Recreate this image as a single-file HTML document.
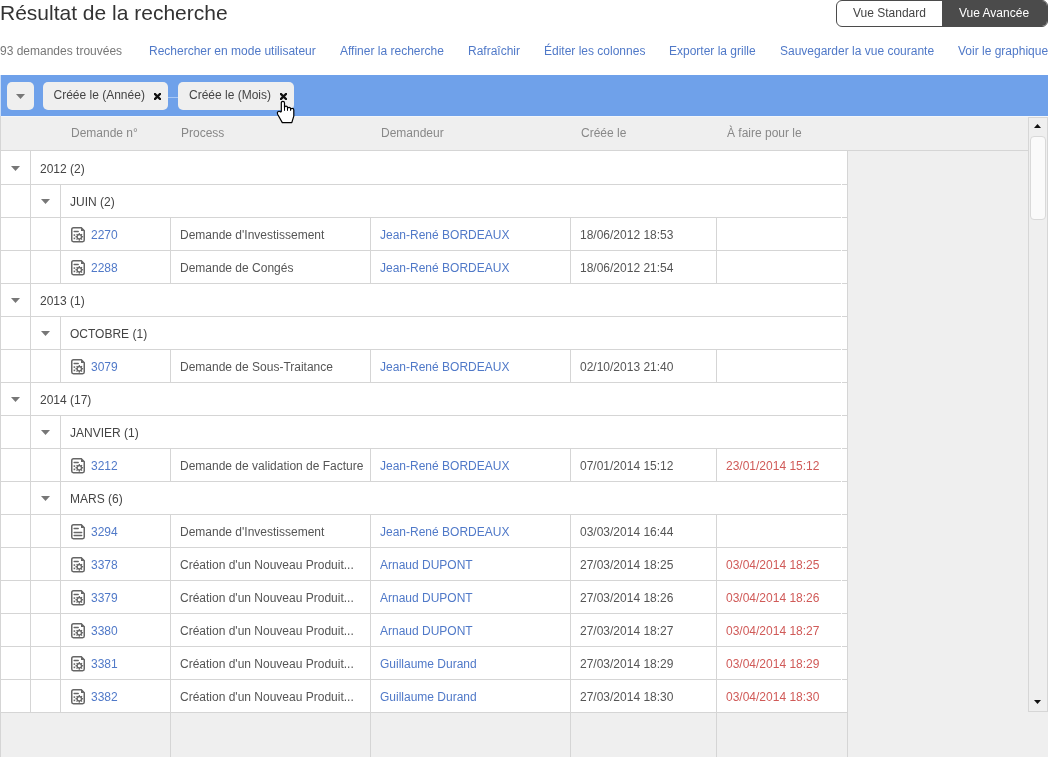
<!DOCTYPE html>
<html><head><meta charset="utf-8">
<style>
html,body{margin:0;padding:0;}
body{width:1048px;height:757px;overflow:hidden;position:relative;background:#fff;will-change:transform;font-family:"Liberation Sans",sans-serif;}
.ln{position:absolute;}
.t{position:absolute;white-space:nowrap;line-height:1;}
.title{color:#333;}
.count{color:#777;}
.link{color:#5079c8;}
.std{color:#444;}
.adv{color:#fff;}
.chip{color:#444;}
.hdr{color:#888;}
.grp{color:#444;}
.txt{color:#555;}
.red{color:#d05a58;}
.ic{position:absolute;}
</style></head><body>
<div class="t title" style="left:0px;top:2px;font-size:21px">Résultat de la recherche</div>
<div class="t count" style="left:0px;top:45px;font-size:12px">93 demandes trouvées</div>
<div class="t link" style="left:149px;top:45px;font-size:12px">Rechercher en mode utilisateur</div>
<div class="t link" style="left:340px;top:45px;font-size:12px">Affiner la recherche</div>
<div class="t link" style="left:468px;top:45px;font-size:12px">Rafraîchir</div>
<div class="t link" style="left:544px;top:45px;font-size:12px">Éditer les colonnes</div>
<div class="t link" style="left:669px;top:45px;font-size:12px">Exporter la grille</div>
<div class="t link" style="left:780px;top:45px;font-size:12px">Sauvegarder la vue courante</div>
<div class="t link" style="left:958px;top:45px;font-size:12px">Voir le graphique</div>
<div class="ln" style="left:836px;top:0px;width:212px;height:27px;box-sizing:border-box;border:1px solid #4b4b4b;border-radius:6px;background:#fff;overflow:hidden"><div style="position:absolute;left:105px;top:0;right:0;bottom:0;background:#4b4b4b"></div></div>
<div class="t std" style="left:853px;top:7px;font-size:12px">Vue Standard</div>
<div class="t adv" style="left:959px;top:7px;font-size:12px">Vue Avancée</div>
<div class="ln" style="left:0;top:75px;width:1048px;height:41px;background:#6fa1ea"></div>
<div class="ln" style="left:7px;top:82px;width:27px;height:28px;background:#efefef;border-radius:5px"></div>
<svg class="ln" style="left:16px;top:94px" width="9" height="5"><path d="M0,0 H9 L4.5,5 Z" fill="#777"/></svg>
<div class="ln" style="left:43px;top:82px;width:125px;height:28px;background:#efefef;border-radius:5px"></div>
<div class="ln" style="left:168px;top:97px;width:10px;height:1px;background:#a9c8f5"></div>
<div class="ln" style="left:178px;top:82px;width:116px;height:28px;background:#efefef;border-radius:5px"></div>
<div class="t chip" style="left:53.5px;top:89px;font-size:12px">Créée le (Année)</div>
<div class="t chip" style="left:189px;top:89px;font-size:12px">Créée le (Mois)</div>
<svg class="ln" style="left:154px;top:93px" width="7" height="7" viewBox="0 0 7 7"><path d="M1,1 L6,6 M6,1 L1,6" stroke="#111" stroke-width="2.3" stroke-linecap="square"/></svg>
<svg class="ln" style="left:280px;top:93px" width="7" height="7" viewBox="0 0 7 7"><path d="M1,1 L6,6 M6,1 L1,6" stroke="#111" stroke-width="2.3" stroke-linecap="square"/></svg>
<div class="ln" style="left:0;top:116px;width:1048px;height:641px;background:#efefef"></div>
<div class="ln" style="left:0px;top:116px;width:1px;height:641px;background:#d5d5d5"></div>
<div class="ln" style="left:1px;top:116px;width:1047px;height:1px;background:#f3f6fa"></div>
<div class="ln" style="left:0px;top:75px;width:1px;height:41px;background:#c9ddf8"></div>
<div class="ln" style="left:0px;top:150px;width:1028px;height:1px;background:#d5d5d5"></div>
<div class="t hdr" style="left:71px;top:127px;font-size:12px">Demande n°</div>
<div class="t hdr" style="left:181px;top:127px;font-size:12px">Process</div>
<div class="t hdr" style="left:381px;top:127px;font-size:12px">Demandeur</div>
<div class="t hdr" style="left:581px;top:127px;font-size:12px">Créée le</div>
<div class="t hdr" style="left:727px;top:127px;font-size:12px">À faire pour le</div>
<div class="ln" style="left:1px;top:151px;width:846px;height:561px;background:#fff"></div>
<div class="ln" style="left:1px;top:184px;width:847px;height:1px;background:#d5d5d5"></div>
<div class="ln" style="left:841px;top:184px;width:1px;height:1px;background:#fff"></div>
<div class="ln" style="left:30px;top:151px;width:1px;height:33px;background:#d5d5d5"></div>
<div class="ln" style="left:847px;top:151px;width:1px;height:33px;background:#d5d5d5"></div>
<svg class="ln" style="left:11px;top:166px" width="9" height="5"><path d="M0,0 H9 L4.5,5 Z" fill="#777"/></svg>
<div class="t grp" style="left:40px;top:163px;font-size:12px">2012 (2)</div>
<div class="ln" style="left:1px;top:217px;width:847px;height:1px;background:#d5d5d5"></div>
<div class="ln" style="left:841px;top:217px;width:1px;height:1px;background:#fff"></div>
<div class="ln" style="left:30px;top:185px;width:1px;height:32px;background:#d5d5d5"></div>
<div class="ln" style="left:847px;top:185px;width:1px;height:32px;background:#d5d5d5"></div>
<div class="ln" style="left:60px;top:185px;width:1px;height:32px;background:#d5d5d5"></div>
<svg class="ln" style="left:41px;top:199px" width="9" height="5"><path d="M0,0 H9 L4.5,5 Z" fill="#777"/></svg>
<div class="t grp" style="left:70px;top:196px;font-size:12px">JUIN (2)</div>
<div class="ln" style="left:1px;top:250px;width:847px;height:1px;background:#d5d5d5"></div>
<div class="ln" style="left:841px;top:250px;width:1px;height:1px;background:#fff"></div>
<div class="ln" style="left:30px;top:218px;width:1px;height:32px;background:#d5d5d5"></div>
<div class="ln" style="left:847px;top:218px;width:1px;height:32px;background:#d5d5d5"></div>
<div class="ln" style="left:60px;top:218px;width:1px;height:32px;background:#d5d5d5"></div>
<div class="ln" style="left:170px;top:218px;width:1px;height:32px;background:#d5d5d5"></div>
<div class="ln" style="left:370px;top:218px;width:1px;height:32px;background:#d5d5d5"></div>
<div class="ln" style="left:570px;top:218px;width:1px;height:32px;background:#d5d5d5"></div>
<div class="ln" style="left:716px;top:218px;width:1px;height:32px;background:#d5d5d5"></div>
<svg class="ic" style="left:71px;top:227px" width="15" height="17" viewBox="0 0 15 17">
<path d="M2.5,0.75 H10.3 L13.25,3.7 V13.1 Q13.25,14.8 11.6,14.8 H2.4 Q0.75,14.8 0.75,13.1 V2.5 Q0.75,0.75 2.5,0.75 Z" fill="none" stroke="#666" stroke-width="1.5"/>
<path d="M10,0.5 L13.5,4 H10 Z" fill="#666"/>
<line x1="3.2" y1="4.5" x2="7.2" y2="4.5" stroke="#666" stroke-width="1.5" stroke-linecap="round"/>
<rect x="2.6" y="7.3" width="1.6" height="1.6" fill="#666"/><rect x="2.6" y="10.6" width="1.6" height="1.6" fill="#666"/>
<path d="M7.58,6.99 L7.75,5.94 L8.85,5.94 L9.02,6.99 L9.78,7.30 L10.64,6.68 L11.42,7.46 L10.80,8.32 L11.11,9.08 L12.16,9.25 L12.16,10.35 L11.11,10.52 L10.80,11.28 L11.42,12.14 L10.64,12.92 L9.78,12.30 L9.02,12.61 L8.85,13.66 L7.75,13.66 L7.58,12.61 L6.82,12.30 L5.96,12.92 L5.18,12.14 L5.80,11.28 L5.49,10.52 L4.44,10.35 L4.44,9.25 L5.49,9.08 L5.80,8.32 L5.18,7.46 L5.96,6.68 L6.82,7.30 Z" fill="#666"/>
<circle cx="8.3" cy="9.8" r="1.5" fill="#fff"/>
</svg>
<div class="t link" style="left:91px;top:229px;font-size:12px">2270</div>
<div class="t txt" style="left:180px;top:229px;font-size:12px">Demande d'Investissement</div>
<div class="t link" style="left:380px;top:229px;font-size:12px">Jean-René BORDEAUX</div>
<div class="t txt" style="left:580px;top:229px;font-size:12px">18/06/2012 18:53</div>
<div class="ln" style="left:1px;top:283px;width:847px;height:1px;background:#d5d5d5"></div>
<div class="ln" style="left:841px;top:283px;width:1px;height:1px;background:#fff"></div>
<div class="ln" style="left:30px;top:251px;width:1px;height:32px;background:#d5d5d5"></div>
<div class="ln" style="left:847px;top:251px;width:1px;height:32px;background:#d5d5d5"></div>
<div class="ln" style="left:60px;top:251px;width:1px;height:32px;background:#d5d5d5"></div>
<div class="ln" style="left:170px;top:251px;width:1px;height:32px;background:#d5d5d5"></div>
<div class="ln" style="left:370px;top:251px;width:1px;height:32px;background:#d5d5d5"></div>
<div class="ln" style="left:570px;top:251px;width:1px;height:32px;background:#d5d5d5"></div>
<div class="ln" style="left:716px;top:251px;width:1px;height:32px;background:#d5d5d5"></div>
<svg class="ic" style="left:71px;top:260px" width="15" height="17" viewBox="0 0 15 17">
<path d="M2.5,0.75 H10.3 L13.25,3.7 V13.1 Q13.25,14.8 11.6,14.8 H2.4 Q0.75,14.8 0.75,13.1 V2.5 Q0.75,0.75 2.5,0.75 Z" fill="none" stroke="#666" stroke-width="1.5"/>
<path d="M10,0.5 L13.5,4 H10 Z" fill="#666"/>
<line x1="3.2" y1="4.5" x2="7.2" y2="4.5" stroke="#666" stroke-width="1.5" stroke-linecap="round"/>
<rect x="2.6" y="7.3" width="1.6" height="1.6" fill="#666"/><rect x="2.6" y="10.6" width="1.6" height="1.6" fill="#666"/>
<path d="M7.58,6.99 L7.75,5.94 L8.85,5.94 L9.02,6.99 L9.78,7.30 L10.64,6.68 L11.42,7.46 L10.80,8.32 L11.11,9.08 L12.16,9.25 L12.16,10.35 L11.11,10.52 L10.80,11.28 L11.42,12.14 L10.64,12.92 L9.78,12.30 L9.02,12.61 L8.85,13.66 L7.75,13.66 L7.58,12.61 L6.82,12.30 L5.96,12.92 L5.18,12.14 L5.80,11.28 L5.49,10.52 L4.44,10.35 L4.44,9.25 L5.49,9.08 L5.80,8.32 L5.18,7.46 L5.96,6.68 L6.82,7.30 Z" fill="#666"/>
<circle cx="8.3" cy="9.8" r="1.5" fill="#fff"/>
</svg>
<div class="t link" style="left:91px;top:262px;font-size:12px">2288</div>
<div class="t txt" style="left:180px;top:262px;font-size:12px">Demande de Congés</div>
<div class="t link" style="left:380px;top:262px;font-size:12px">Jean-René BORDEAUX</div>
<div class="t txt" style="left:580px;top:262px;font-size:12px">18/06/2012 21:54</div>
<div class="ln" style="left:1px;top:316px;width:847px;height:1px;background:#d5d5d5"></div>
<div class="ln" style="left:841px;top:316px;width:1px;height:1px;background:#fff"></div>
<div class="ln" style="left:30px;top:284px;width:1px;height:32px;background:#d5d5d5"></div>
<div class="ln" style="left:847px;top:284px;width:1px;height:32px;background:#d5d5d5"></div>
<svg class="ln" style="left:11px;top:298px" width="9" height="5"><path d="M0,0 H9 L4.5,5 Z" fill="#777"/></svg>
<div class="t grp" style="left:40px;top:295px;font-size:12px">2013 (1)</div>
<div class="ln" style="left:1px;top:349px;width:847px;height:1px;background:#d5d5d5"></div>
<div class="ln" style="left:841px;top:349px;width:1px;height:1px;background:#fff"></div>
<div class="ln" style="left:30px;top:317px;width:1px;height:32px;background:#d5d5d5"></div>
<div class="ln" style="left:847px;top:317px;width:1px;height:32px;background:#d5d5d5"></div>
<div class="ln" style="left:60px;top:317px;width:1px;height:32px;background:#d5d5d5"></div>
<svg class="ln" style="left:41px;top:331px" width="9" height="5"><path d="M0,0 H9 L4.5,5 Z" fill="#777"/></svg>
<div class="t grp" style="left:70px;top:328px;font-size:12px">OCTOBRE (1)</div>
<div class="ln" style="left:1px;top:382px;width:847px;height:1px;background:#d5d5d5"></div>
<div class="ln" style="left:841px;top:382px;width:1px;height:1px;background:#fff"></div>
<div class="ln" style="left:30px;top:350px;width:1px;height:32px;background:#d5d5d5"></div>
<div class="ln" style="left:847px;top:350px;width:1px;height:32px;background:#d5d5d5"></div>
<div class="ln" style="left:60px;top:350px;width:1px;height:32px;background:#d5d5d5"></div>
<div class="ln" style="left:170px;top:350px;width:1px;height:32px;background:#d5d5d5"></div>
<div class="ln" style="left:370px;top:350px;width:1px;height:32px;background:#d5d5d5"></div>
<div class="ln" style="left:570px;top:350px;width:1px;height:32px;background:#d5d5d5"></div>
<div class="ln" style="left:716px;top:350px;width:1px;height:32px;background:#d5d5d5"></div>
<svg class="ic" style="left:71px;top:359px" width="15" height="17" viewBox="0 0 15 17">
<path d="M2.5,0.75 H10.3 L13.25,3.7 V13.1 Q13.25,14.8 11.6,14.8 H2.4 Q0.75,14.8 0.75,13.1 V2.5 Q0.75,0.75 2.5,0.75 Z" fill="none" stroke="#666" stroke-width="1.5"/>
<path d="M10,0.5 L13.5,4 H10 Z" fill="#666"/>
<line x1="3.2" y1="4.5" x2="7.2" y2="4.5" stroke="#666" stroke-width="1.5" stroke-linecap="round"/>
<rect x="2.6" y="7.3" width="1.6" height="1.6" fill="#666"/><rect x="2.6" y="10.6" width="1.6" height="1.6" fill="#666"/>
<path d="M7.58,6.99 L7.75,5.94 L8.85,5.94 L9.02,6.99 L9.78,7.30 L10.64,6.68 L11.42,7.46 L10.80,8.32 L11.11,9.08 L12.16,9.25 L12.16,10.35 L11.11,10.52 L10.80,11.28 L11.42,12.14 L10.64,12.92 L9.78,12.30 L9.02,12.61 L8.85,13.66 L7.75,13.66 L7.58,12.61 L6.82,12.30 L5.96,12.92 L5.18,12.14 L5.80,11.28 L5.49,10.52 L4.44,10.35 L4.44,9.25 L5.49,9.08 L5.80,8.32 L5.18,7.46 L5.96,6.68 L6.82,7.30 Z" fill="#666"/>
<circle cx="8.3" cy="9.8" r="1.5" fill="#fff"/>
</svg>
<div class="t link" style="left:91px;top:361px;font-size:12px">3079</div>
<div class="t txt" style="left:180px;top:361px;font-size:12px">Demande de Sous-Traitance</div>
<div class="t link" style="left:380px;top:361px;font-size:12px">Jean-René BORDEAUX</div>
<div class="t txt" style="left:580px;top:361px;font-size:12px">02/10/2013 21:40</div>
<div class="ln" style="left:1px;top:415px;width:847px;height:1px;background:#d5d5d5"></div>
<div class="ln" style="left:841px;top:415px;width:1px;height:1px;background:#fff"></div>
<div class="ln" style="left:30px;top:383px;width:1px;height:32px;background:#d5d5d5"></div>
<div class="ln" style="left:847px;top:383px;width:1px;height:32px;background:#d5d5d5"></div>
<svg class="ln" style="left:11px;top:397px" width="9" height="5"><path d="M0,0 H9 L4.5,5 Z" fill="#777"/></svg>
<div class="t grp" style="left:40px;top:394px;font-size:12px">2014 (17)</div>
<div class="ln" style="left:1px;top:448px;width:847px;height:1px;background:#d5d5d5"></div>
<div class="ln" style="left:841px;top:448px;width:1px;height:1px;background:#fff"></div>
<div class="ln" style="left:30px;top:416px;width:1px;height:32px;background:#d5d5d5"></div>
<div class="ln" style="left:847px;top:416px;width:1px;height:32px;background:#d5d5d5"></div>
<div class="ln" style="left:60px;top:416px;width:1px;height:32px;background:#d5d5d5"></div>
<svg class="ln" style="left:41px;top:430px" width="9" height="5"><path d="M0,0 H9 L4.5,5 Z" fill="#777"/></svg>
<div class="t grp" style="left:70px;top:427px;font-size:12px">JANVIER (1)</div>
<div class="ln" style="left:1px;top:481px;width:847px;height:1px;background:#d5d5d5"></div>
<div class="ln" style="left:841px;top:481px;width:1px;height:1px;background:#fff"></div>
<div class="ln" style="left:30px;top:449px;width:1px;height:32px;background:#d5d5d5"></div>
<div class="ln" style="left:847px;top:449px;width:1px;height:32px;background:#d5d5d5"></div>
<div class="ln" style="left:60px;top:449px;width:1px;height:32px;background:#d5d5d5"></div>
<div class="ln" style="left:170px;top:449px;width:1px;height:32px;background:#d5d5d5"></div>
<div class="ln" style="left:370px;top:449px;width:1px;height:32px;background:#d5d5d5"></div>
<div class="ln" style="left:570px;top:449px;width:1px;height:32px;background:#d5d5d5"></div>
<div class="ln" style="left:716px;top:449px;width:1px;height:32px;background:#d5d5d5"></div>
<svg class="ic" style="left:71px;top:458px" width="15" height="17" viewBox="0 0 15 17">
<path d="M2.5,0.75 H10.3 L13.25,3.7 V13.1 Q13.25,14.8 11.6,14.8 H2.4 Q0.75,14.8 0.75,13.1 V2.5 Q0.75,0.75 2.5,0.75 Z" fill="none" stroke="#666" stroke-width="1.5"/>
<path d="M10,0.5 L13.5,4 H10 Z" fill="#666"/>
<line x1="3.2" y1="4.5" x2="7.2" y2="4.5" stroke="#666" stroke-width="1.5" stroke-linecap="round"/>
<rect x="2.6" y="7.3" width="1.6" height="1.6" fill="#666"/><rect x="2.6" y="10.6" width="1.6" height="1.6" fill="#666"/>
<path d="M7.58,6.99 L7.75,5.94 L8.85,5.94 L9.02,6.99 L9.78,7.30 L10.64,6.68 L11.42,7.46 L10.80,8.32 L11.11,9.08 L12.16,9.25 L12.16,10.35 L11.11,10.52 L10.80,11.28 L11.42,12.14 L10.64,12.92 L9.78,12.30 L9.02,12.61 L8.85,13.66 L7.75,13.66 L7.58,12.61 L6.82,12.30 L5.96,12.92 L5.18,12.14 L5.80,11.28 L5.49,10.52 L4.44,10.35 L4.44,9.25 L5.49,9.08 L5.80,8.32 L5.18,7.46 L5.96,6.68 L6.82,7.30 Z" fill="#666"/>
<circle cx="8.3" cy="9.8" r="1.5" fill="#fff"/>
</svg>
<div class="t link" style="left:91px;top:460px;font-size:12px">3212</div>
<div class="t txt" style="left:180px;top:460px;font-size:12px">Demande de validation de Facture</div>
<div class="t link" style="left:380px;top:460px;font-size:12px">Jean-René BORDEAUX</div>
<div class="t txt" style="left:580px;top:460px;font-size:12px">07/01/2014 15:12</div>
<div class="t red" style="left:726px;top:460px;font-size:12px">23/01/2014 15:12</div>
<div class="ln" style="left:1px;top:514px;width:847px;height:1px;background:#d5d5d5"></div>
<div class="ln" style="left:841px;top:514px;width:1px;height:1px;background:#fff"></div>
<div class="ln" style="left:30px;top:482px;width:1px;height:32px;background:#d5d5d5"></div>
<div class="ln" style="left:847px;top:482px;width:1px;height:32px;background:#d5d5d5"></div>
<div class="ln" style="left:60px;top:482px;width:1px;height:32px;background:#d5d5d5"></div>
<svg class="ln" style="left:41px;top:496px" width="9" height="5"><path d="M0,0 H9 L4.5,5 Z" fill="#777"/></svg>
<div class="t grp" style="left:70px;top:493px;font-size:12px">MARS (6)</div>
<div class="ln" style="left:1px;top:547px;width:847px;height:1px;background:#d5d5d5"></div>
<div class="ln" style="left:841px;top:547px;width:1px;height:1px;background:#fff"></div>
<div class="ln" style="left:30px;top:515px;width:1px;height:32px;background:#d5d5d5"></div>
<div class="ln" style="left:847px;top:515px;width:1px;height:32px;background:#d5d5d5"></div>
<div class="ln" style="left:60px;top:515px;width:1px;height:32px;background:#d5d5d5"></div>
<div class="ln" style="left:170px;top:515px;width:1px;height:32px;background:#d5d5d5"></div>
<div class="ln" style="left:370px;top:515px;width:1px;height:32px;background:#d5d5d5"></div>
<div class="ln" style="left:570px;top:515px;width:1px;height:32px;background:#d5d5d5"></div>
<div class="ln" style="left:716px;top:515px;width:1px;height:32px;background:#d5d5d5"></div>
<svg class="ic" style="left:71px;top:524px" width="15" height="17" viewBox="0 0 15 17">
<path d="M2.5,0.75 H10.3 L13.25,3.7 V13.1 Q13.25,14.8 11.6,14.8 H2.4 Q0.75,14.8 0.75,13.1 V2.5 Q0.75,0.75 2.5,0.75 Z" fill="none" stroke="#666" stroke-width="1.5"/>
<path d="M10,0.5 L13.5,4 H10 Z" fill="#666"/>
<line x1="3.2" y1="4.5" x2="7.2" y2="4.5" stroke="#666" stroke-width="1.5" stroke-linecap="round"/>
<line x1="3.2" y1="8.5" x2="10.6" y2="8.5" stroke="#666" stroke-width="1.5" stroke-linecap="round"/>
<line x1="3.2" y1="11.5" x2="10.6" y2="11.5" stroke="#666" stroke-width="1.5" stroke-linecap="round"/>
</svg>
<div class="t link" style="left:91px;top:526px;font-size:12px">3294</div>
<div class="t txt" style="left:180px;top:526px;font-size:12px">Demande d'Investissement</div>
<div class="t link" style="left:380px;top:526px;font-size:12px">Jean-René BORDEAUX</div>
<div class="t txt" style="left:580px;top:526px;font-size:12px">03/03/2014 16:44</div>
<div class="ln" style="left:1px;top:580px;width:847px;height:1px;background:#d5d5d5"></div>
<div class="ln" style="left:841px;top:580px;width:1px;height:1px;background:#fff"></div>
<div class="ln" style="left:30px;top:548px;width:1px;height:32px;background:#d5d5d5"></div>
<div class="ln" style="left:847px;top:548px;width:1px;height:32px;background:#d5d5d5"></div>
<div class="ln" style="left:60px;top:548px;width:1px;height:32px;background:#d5d5d5"></div>
<div class="ln" style="left:170px;top:548px;width:1px;height:32px;background:#d5d5d5"></div>
<div class="ln" style="left:370px;top:548px;width:1px;height:32px;background:#d5d5d5"></div>
<div class="ln" style="left:570px;top:548px;width:1px;height:32px;background:#d5d5d5"></div>
<div class="ln" style="left:716px;top:548px;width:1px;height:32px;background:#d5d5d5"></div>
<svg class="ic" style="left:71px;top:557px" width="15" height="17" viewBox="0 0 15 17">
<path d="M2.5,0.75 H10.3 L13.25,3.7 V13.1 Q13.25,14.8 11.6,14.8 H2.4 Q0.75,14.8 0.75,13.1 V2.5 Q0.75,0.75 2.5,0.75 Z" fill="none" stroke="#666" stroke-width="1.5"/>
<path d="M10,0.5 L13.5,4 H10 Z" fill="#666"/>
<line x1="3.2" y1="4.5" x2="7.2" y2="4.5" stroke="#666" stroke-width="1.5" stroke-linecap="round"/>
<rect x="2.6" y="7.3" width="1.6" height="1.6" fill="#666"/><rect x="2.6" y="10.6" width="1.6" height="1.6" fill="#666"/>
<path d="M7.58,6.99 L7.75,5.94 L8.85,5.94 L9.02,6.99 L9.78,7.30 L10.64,6.68 L11.42,7.46 L10.80,8.32 L11.11,9.08 L12.16,9.25 L12.16,10.35 L11.11,10.52 L10.80,11.28 L11.42,12.14 L10.64,12.92 L9.78,12.30 L9.02,12.61 L8.85,13.66 L7.75,13.66 L7.58,12.61 L6.82,12.30 L5.96,12.92 L5.18,12.14 L5.80,11.28 L5.49,10.52 L4.44,10.35 L4.44,9.25 L5.49,9.08 L5.80,8.32 L5.18,7.46 L5.96,6.68 L6.82,7.30 Z" fill="#666"/>
<circle cx="8.3" cy="9.8" r="1.5" fill="#fff"/>
</svg>
<div class="t link" style="left:91px;top:559px;font-size:12px">3378</div>
<div class="t txt" style="left:180px;top:559px;font-size:12px">Création d'un Nouveau Produit...</div>
<div class="t link" style="left:380px;top:559px;font-size:12px">Arnaud DUPONT</div>
<div class="t txt" style="left:580px;top:559px;font-size:12px">27/03/2014 18:25</div>
<div class="t red" style="left:726px;top:559px;font-size:12px">03/04/2014 18:25</div>
<div class="ln" style="left:1px;top:613px;width:847px;height:1px;background:#d5d5d5"></div>
<div class="ln" style="left:841px;top:613px;width:1px;height:1px;background:#fff"></div>
<div class="ln" style="left:30px;top:581px;width:1px;height:32px;background:#d5d5d5"></div>
<div class="ln" style="left:847px;top:581px;width:1px;height:32px;background:#d5d5d5"></div>
<div class="ln" style="left:60px;top:581px;width:1px;height:32px;background:#d5d5d5"></div>
<div class="ln" style="left:170px;top:581px;width:1px;height:32px;background:#d5d5d5"></div>
<div class="ln" style="left:370px;top:581px;width:1px;height:32px;background:#d5d5d5"></div>
<div class="ln" style="left:570px;top:581px;width:1px;height:32px;background:#d5d5d5"></div>
<div class="ln" style="left:716px;top:581px;width:1px;height:32px;background:#d5d5d5"></div>
<svg class="ic" style="left:71px;top:590px" width="15" height="17" viewBox="0 0 15 17">
<path d="M2.5,0.75 H10.3 L13.25,3.7 V13.1 Q13.25,14.8 11.6,14.8 H2.4 Q0.75,14.8 0.75,13.1 V2.5 Q0.75,0.75 2.5,0.75 Z" fill="none" stroke="#666" stroke-width="1.5"/>
<path d="M10,0.5 L13.5,4 H10 Z" fill="#666"/>
<line x1="3.2" y1="4.5" x2="7.2" y2="4.5" stroke="#666" stroke-width="1.5" stroke-linecap="round"/>
<rect x="2.6" y="7.3" width="1.6" height="1.6" fill="#666"/><rect x="2.6" y="10.6" width="1.6" height="1.6" fill="#666"/>
<path d="M7.58,6.99 L7.75,5.94 L8.85,5.94 L9.02,6.99 L9.78,7.30 L10.64,6.68 L11.42,7.46 L10.80,8.32 L11.11,9.08 L12.16,9.25 L12.16,10.35 L11.11,10.52 L10.80,11.28 L11.42,12.14 L10.64,12.92 L9.78,12.30 L9.02,12.61 L8.85,13.66 L7.75,13.66 L7.58,12.61 L6.82,12.30 L5.96,12.92 L5.18,12.14 L5.80,11.28 L5.49,10.52 L4.44,10.35 L4.44,9.25 L5.49,9.08 L5.80,8.32 L5.18,7.46 L5.96,6.68 L6.82,7.30 Z" fill="#666"/>
<circle cx="8.3" cy="9.8" r="1.5" fill="#fff"/>
</svg>
<div class="t link" style="left:91px;top:592px;font-size:12px">3379</div>
<div class="t txt" style="left:180px;top:592px;font-size:12px">Création d'un Nouveau Produit...</div>
<div class="t link" style="left:380px;top:592px;font-size:12px">Arnaud DUPONT</div>
<div class="t txt" style="left:580px;top:592px;font-size:12px">27/03/2014 18:26</div>
<div class="t red" style="left:726px;top:592px;font-size:12px">03/04/2014 18:26</div>
<div class="ln" style="left:1px;top:646px;width:847px;height:1px;background:#d5d5d5"></div>
<div class="ln" style="left:841px;top:646px;width:1px;height:1px;background:#fff"></div>
<div class="ln" style="left:30px;top:614px;width:1px;height:32px;background:#d5d5d5"></div>
<div class="ln" style="left:847px;top:614px;width:1px;height:32px;background:#d5d5d5"></div>
<div class="ln" style="left:60px;top:614px;width:1px;height:32px;background:#d5d5d5"></div>
<div class="ln" style="left:170px;top:614px;width:1px;height:32px;background:#d5d5d5"></div>
<div class="ln" style="left:370px;top:614px;width:1px;height:32px;background:#d5d5d5"></div>
<div class="ln" style="left:570px;top:614px;width:1px;height:32px;background:#d5d5d5"></div>
<div class="ln" style="left:716px;top:614px;width:1px;height:32px;background:#d5d5d5"></div>
<svg class="ic" style="left:71px;top:623px" width="15" height="17" viewBox="0 0 15 17">
<path d="M2.5,0.75 H10.3 L13.25,3.7 V13.1 Q13.25,14.8 11.6,14.8 H2.4 Q0.75,14.8 0.75,13.1 V2.5 Q0.75,0.75 2.5,0.75 Z" fill="none" stroke="#666" stroke-width="1.5"/>
<path d="M10,0.5 L13.5,4 H10 Z" fill="#666"/>
<line x1="3.2" y1="4.5" x2="7.2" y2="4.5" stroke="#666" stroke-width="1.5" stroke-linecap="round"/>
<rect x="2.6" y="7.3" width="1.6" height="1.6" fill="#666"/><rect x="2.6" y="10.6" width="1.6" height="1.6" fill="#666"/>
<path d="M7.58,6.99 L7.75,5.94 L8.85,5.94 L9.02,6.99 L9.78,7.30 L10.64,6.68 L11.42,7.46 L10.80,8.32 L11.11,9.08 L12.16,9.25 L12.16,10.35 L11.11,10.52 L10.80,11.28 L11.42,12.14 L10.64,12.92 L9.78,12.30 L9.02,12.61 L8.85,13.66 L7.75,13.66 L7.58,12.61 L6.82,12.30 L5.96,12.92 L5.18,12.14 L5.80,11.28 L5.49,10.52 L4.44,10.35 L4.44,9.25 L5.49,9.08 L5.80,8.32 L5.18,7.46 L5.96,6.68 L6.82,7.30 Z" fill="#666"/>
<circle cx="8.3" cy="9.8" r="1.5" fill="#fff"/>
</svg>
<div class="t link" style="left:91px;top:625px;font-size:12px">3380</div>
<div class="t txt" style="left:180px;top:625px;font-size:12px">Création d'un Nouveau Produit...</div>
<div class="t link" style="left:380px;top:625px;font-size:12px">Arnaud DUPONT</div>
<div class="t txt" style="left:580px;top:625px;font-size:12px">27/03/2014 18:27</div>
<div class="t red" style="left:726px;top:625px;font-size:12px">03/04/2014 18:27</div>
<div class="ln" style="left:1px;top:679px;width:847px;height:1px;background:#d5d5d5"></div>
<div class="ln" style="left:841px;top:679px;width:1px;height:1px;background:#fff"></div>
<div class="ln" style="left:30px;top:647px;width:1px;height:32px;background:#d5d5d5"></div>
<div class="ln" style="left:847px;top:647px;width:1px;height:32px;background:#d5d5d5"></div>
<div class="ln" style="left:60px;top:647px;width:1px;height:32px;background:#d5d5d5"></div>
<div class="ln" style="left:170px;top:647px;width:1px;height:32px;background:#d5d5d5"></div>
<div class="ln" style="left:370px;top:647px;width:1px;height:32px;background:#d5d5d5"></div>
<div class="ln" style="left:570px;top:647px;width:1px;height:32px;background:#d5d5d5"></div>
<div class="ln" style="left:716px;top:647px;width:1px;height:32px;background:#d5d5d5"></div>
<svg class="ic" style="left:71px;top:656px" width="15" height="17" viewBox="0 0 15 17">
<path d="M2.5,0.75 H10.3 L13.25,3.7 V13.1 Q13.25,14.8 11.6,14.8 H2.4 Q0.75,14.8 0.75,13.1 V2.5 Q0.75,0.75 2.5,0.75 Z" fill="none" stroke="#666" stroke-width="1.5"/>
<path d="M10,0.5 L13.5,4 H10 Z" fill="#666"/>
<line x1="3.2" y1="4.5" x2="7.2" y2="4.5" stroke="#666" stroke-width="1.5" stroke-linecap="round"/>
<rect x="2.6" y="7.3" width="1.6" height="1.6" fill="#666"/><rect x="2.6" y="10.6" width="1.6" height="1.6" fill="#666"/>
<path d="M7.58,6.99 L7.75,5.94 L8.85,5.94 L9.02,6.99 L9.78,7.30 L10.64,6.68 L11.42,7.46 L10.80,8.32 L11.11,9.08 L12.16,9.25 L12.16,10.35 L11.11,10.52 L10.80,11.28 L11.42,12.14 L10.64,12.92 L9.78,12.30 L9.02,12.61 L8.85,13.66 L7.75,13.66 L7.58,12.61 L6.82,12.30 L5.96,12.92 L5.18,12.14 L5.80,11.28 L5.49,10.52 L4.44,10.35 L4.44,9.25 L5.49,9.08 L5.80,8.32 L5.18,7.46 L5.96,6.68 L6.82,7.30 Z" fill="#666"/>
<circle cx="8.3" cy="9.8" r="1.5" fill="#fff"/>
</svg>
<div class="t link" style="left:91px;top:658px;font-size:12px">3381</div>
<div class="t txt" style="left:180px;top:658px;font-size:12px">Création d'un Nouveau Produit...</div>
<div class="t link" style="left:380px;top:658px;font-size:12px">Guillaume Durand</div>
<div class="t txt" style="left:580px;top:658px;font-size:12px">27/03/2014 18:29</div>
<div class="t red" style="left:726px;top:658px;font-size:12px">03/04/2014 18:29</div>
<div class="ln" style="left:1px;top:712px;width:847px;height:1px;background:#d5d5d5"></div>
<div class="ln" style="left:30px;top:680px;width:1px;height:32px;background:#d5d5d5"></div>
<div class="ln" style="left:847px;top:680px;width:1px;height:32px;background:#d5d5d5"></div>
<div class="ln" style="left:60px;top:680px;width:1px;height:32px;background:#d5d5d5"></div>
<div class="ln" style="left:170px;top:680px;width:1px;height:32px;background:#d5d5d5"></div>
<div class="ln" style="left:370px;top:680px;width:1px;height:32px;background:#d5d5d5"></div>
<div class="ln" style="left:570px;top:680px;width:1px;height:32px;background:#d5d5d5"></div>
<div class="ln" style="left:716px;top:680px;width:1px;height:32px;background:#d5d5d5"></div>
<svg class="ic" style="left:71px;top:689px" width="15" height="17" viewBox="0 0 15 17">
<path d="M2.5,0.75 H10.3 L13.25,3.7 V13.1 Q13.25,14.8 11.6,14.8 H2.4 Q0.75,14.8 0.75,13.1 V2.5 Q0.75,0.75 2.5,0.75 Z" fill="none" stroke="#666" stroke-width="1.5"/>
<path d="M10,0.5 L13.5,4 H10 Z" fill="#666"/>
<line x1="3.2" y1="4.5" x2="7.2" y2="4.5" stroke="#666" stroke-width="1.5" stroke-linecap="round"/>
<rect x="2.6" y="7.3" width="1.6" height="1.6" fill="#666"/><rect x="2.6" y="10.6" width="1.6" height="1.6" fill="#666"/>
<path d="M7.58,6.99 L7.75,5.94 L8.85,5.94 L9.02,6.99 L9.78,7.30 L10.64,6.68 L11.42,7.46 L10.80,8.32 L11.11,9.08 L12.16,9.25 L12.16,10.35 L11.11,10.52 L10.80,11.28 L11.42,12.14 L10.64,12.92 L9.78,12.30 L9.02,12.61 L8.85,13.66 L7.75,13.66 L7.58,12.61 L6.82,12.30 L5.96,12.92 L5.18,12.14 L5.80,11.28 L5.49,10.52 L4.44,10.35 L4.44,9.25 L5.49,9.08 L5.80,8.32 L5.18,7.46 L5.96,6.68 L6.82,7.30 Z" fill="#666"/>
<circle cx="8.3" cy="9.8" r="1.5" fill="#fff"/>
</svg>
<div class="t link" style="left:91px;top:691px;font-size:12px">3382</div>
<div class="t txt" style="left:180px;top:691px;font-size:12px">Création d'un Nouveau Produit...</div>
<div class="t link" style="left:380px;top:691px;font-size:12px">Guillaume Durand</div>
<div class="t txt" style="left:580px;top:691px;font-size:12px">27/03/2014 18:30</div>
<div class="t red" style="left:726px;top:691px;font-size:12px">03/04/2014 18:30</div>
<div class="ln" style="left:170px;top:712px;width:1px;height:45px;background:#d5d5d5"></div>
<div class="ln" style="left:370px;top:712px;width:1px;height:45px;background:#d5d5d5"></div>
<div class="ln" style="left:570px;top:712px;width:1px;height:45px;background:#d5d5d5"></div>
<div class="ln" style="left:716px;top:712px;width:1px;height:45px;background:#d5d5d5"></div>
<div class="ln" style="left:847px;top:712px;width:1px;height:45px;background:#d5d5d5"></div>
<div class="ln" style="left:1028px;top:117px;width:20px;height:595px;box-sizing:border-box;border:1px solid #d6d6d6;border-bottom-width:1px;background:#efefef"></div>
<div class="ln" style="left:1030px;top:136px;width:16px;height:84px;box-sizing:border-box;border:1px solid #d9d9d9;border-radius:4px;background:#fafafa"></div>
<svg class="ln" style="left:1034px;top:124px" width="7" height="4"><path d="M0,4 H7 L3.5,0 Z" fill="#111"/></svg>
<svg class="ln" style="left:1034px;top:700px" width="7" height="4"><path d="M0,0 H7 L3.5,4 Z" fill="#111"/></svg>
<svg class="ln" style="left:276px;top:100px" width="20" height="24" viewBox="0 0 20 24">
<path d="M5.3,11.6 V2.9 Q5.3,1.3 6.9,1.3 Q8.5,1.3 8.5,2.9 V7.6 Q8.5,6.1 10,6.1 Q11.5,6.1 11.5,7.6 V8.6 Q11.5,7.3 13.05,7.3 Q14.6,7.3 14.6,8.8 V9.6 Q14.6,8.3 16.2,8.3 Q17.8,8.3 17.8,9.9 V16.1 L15.8,22.6 H6.3 L1.6,14.2 Q0.8,12.4 2.2,11.5 Q3.4,10.8 4.5,12 Z" fill="#fff" stroke="#000" stroke-width="1.2" stroke-linejoin="round"/>
<path d="M8.5,7.6 V10.8 M11.5,8.6 V10.8 M14.6,9.6 V10.8" stroke="#000" stroke-width="1"/>
</svg>
</body></html>
